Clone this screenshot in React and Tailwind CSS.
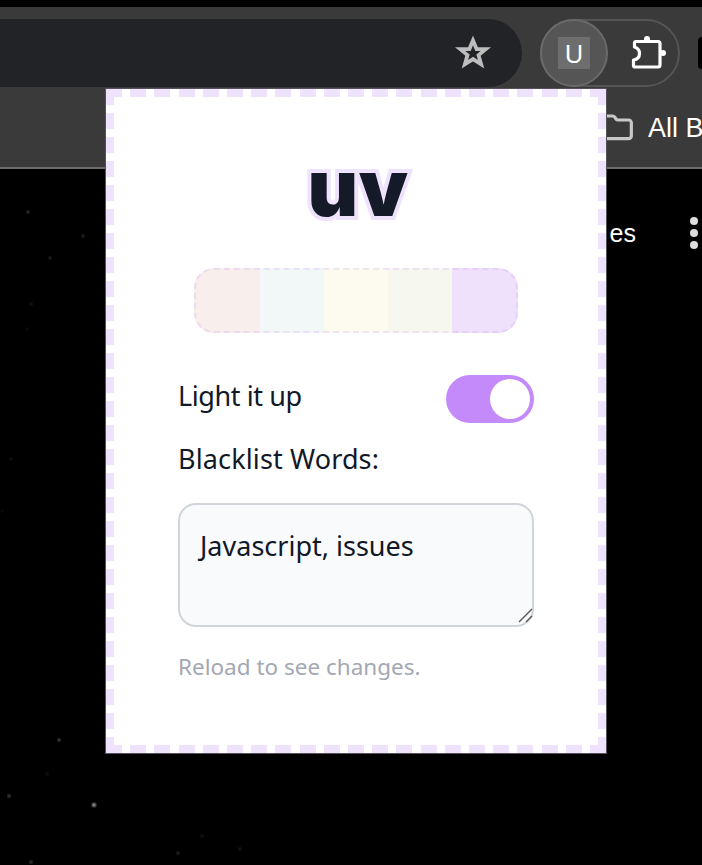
import React from "react";
import { Folder } from "lucide-react";

const swatches = ["flex-1 bg-[#f8eeec]", "w-16 bg-[#f2f7f7]", "w-16 bg-[#fdfbef]", "w-16 bg-[#f6f8f0]", "flex-1 bg-[#efe0fc]"];

const stars = [
  [28, 212, 1.6, 0.28],
  [83, 236, 1.5, 0.22],
  [50, 258, 1.5, 0.2],
  [31, 304, 1.6, 0.12],
  [27, 329, 1.4, 0.07],
  [11, 459, 1.6, 0.1],
  [2, 511, 1.4, 0.08],
  [59, 740, 1.5, 0.4],
  [47, 774, 1.6, 0.1],
  [9, 796, 1.5, 0.4],
  [94, 805, 1.8, 0.85],
  [31, 862, 1.5, 0.35],
  [178, 853, 1.6, 0.22],
  [202, 836, 1.5, 0.12],
  [240, 849, 1.6, 0.14],
];

const StarIcon = () => (
  <svg width="36" height="36" viewBox="0 0 36 36" fill="none" stroke="#bdbdbd" strokeWidth="3.8" strokeLinejoin="miter">
    <path d="M18 5.5l3.6 8.6h9.2l-7.3 6 2.6 9.2-8.1-5.2-8.1 5.2 2.6-9.2-7.3-6h9.2z" />
  </svg>
);

const PuzzleIcon = () => (
  <svg width="36" height="36" viewBox="0 0 36 36" fill="none" stroke="white" strokeWidth="3.2" strokeLinejoin="round">
    <circle cx="17" cy="4" r="3" fill="white" stroke="none" />
    <circle cx="33" cy="18" r="3" fill="white" stroke="none" />
    <path d="M6 6.5h22a2 2 0 0 1 2 2v21.5a2 2 0 0 1-2 2H5a1.5 1.5 0 0 1-1.5-1.5V25c3.5-.5 6-2.4 6-6.5S7 12.8 4.5 12V8A1.5 1.5 0 0 1 6 6.5z" />
  </svg>
);

const App = () => {
  return (
    <div className="relative h-[865px] w-[702px] overflow-hidden bg-black font-['Noto_Sans',sans-serif]">
      {/* Browser chrome */}
      <div className="mt-[7px] flex h-[162px] flex-col border-b-2 border-[#6b6b6b] bg-[#3a3a3a]">
        <div className="mt-3 flex h-[68px] items-center">
          <div className="flex h-full w-[522px] shrink-0 items-center justify-end rounded-r-[34px] bg-[#212326] pr-[31px]">
            <StarIcon />
          </div>
          <div className="ml-[18px] flex h-full w-[140px] shrink-0 items-center rounded-full border-2 border-[#555555]">
            <div className="-ml-[2px] flex h-[68px] w-[68px] items-center justify-center rounded-full border-2 border-[#6a6a6a] bg-[#555555]">
              <div className="flex h-8 w-8 items-center justify-center bg-[#6e6e6e] text-[26px] leading-none text-white">U</div>
            </div>
            <div className="ml-[22px]">
              <PuzzleIcon />
            </div>
          </div>
          <div className="ml-[18px] h-[32px] w-[10px] shrink-0 rounded-sm bg-black" />
        </div>
        <div className="mt-[25px] flex items-center justify-end gap-[14px]">
          <Folder size={32} strokeWidth={2.4} className="text-[#c7c7c7]" />
          <span className="w-[54px] overflow-hidden whitespace-nowrap font-['Liberation_Sans',sans-serif] text-[27px] leading-none text-white">All B</span>
        </div>
      </div>

      {/* Page behind the popup */}
      <div className="flex items-start justify-end pt-[48px]">
        <span className="mr-[54px] mt-1 font-['Liberation_Sans',sans-serif] text-[25px] leading-none text-white">es</span>
        <div className="mr-[4px] flex flex-col gap-1">
          <span className="h-2 w-2 rounded-full bg-[#dddddd]" />
          <span className="h-2 w-2 rounded-full bg-[#dddddd]" />
          <span className="h-2 w-2 rounded-full bg-[#dddddd]" />
        </div>
      </div>

      {/* Starfield */}
      <svg className="absolute inset-0" width="702" height="865">
        <filter id="glow">
          <feGaussianBlur stdDeviation="0.8" />
        </filter>
        {stars.map(([x, y, r, o], i) => (
          <circle key={i} cx={x} cy={y} r={r} fill="white" opacity={o} filter="url(#glow)" />
        ))}
      </svg>

      {/* Popup */}
      <div className="absolute left-[106px] top-[89px] flex h-[664px] w-[500px] flex-col px-[72px] shadow-[0_0_0_1px_#55525c] [background:repeating-linear-gradient(90deg,#efe2fc_0_16px,transparent_16px_24.2px)_top/100%_8px_no-repeat,repeating-linear-gradient(90deg,#efe2fc_0_16px,transparent_16px_24.2px)_bottom/100%_8px_no-repeat,repeating-linear-gradient(180deg,#efe2fc_0_16px,transparent_16px_24px)_left/8px_100%_no-repeat,repeating-linear-gradient(180deg,#efe2fc_0_16px,transparent_16px_24px)_right/8px_100%_no-repeat,white]">
        <h1 className="mt-[64px] pl-1 text-center font-['Inter',sans-serif] text-[78px] font-black leading-[70px] tracking-[0.5px] text-[#151a28] [-webkit-text-stroke:8px_#efe2fc] [paint-order:stroke_fill]">
          uv
        </h1>
        <div className="mx-auto mt-[45px] flex h-[65px] w-[324px] overflow-hidden rounded-[20px] outline-2 -outline-offset-2 outline-dashed outline-[#c58af9]/20">
          {swatches.map((c) => (
            <div key={c} className={c} />
          ))}
        </div>
        <div className="mt-[42px] flex items-start justify-between">
          <span className="text-[27px] leading-[42px] tracking-[-0.4px] text-[#111827]">Light it up</span>
          <div className="flex h-12 w-[88px] items-center justify-end rounded-full bg-[#c58af9] pr-1">
            <div className="h-10 w-10 rounded-full bg-white" />
          </div>
        </div>
        <p className="mt-[15px] text-[27px] leading-[42px] tracking-[0.13px] text-[#111827]">Blacklist Words:</p>
        <div className="relative mt-[23px]">
          <textarea
            readOnly
            defaultValue="Javascript, issues"
            className="block h-[124px] w-full resize-none rounded-[18px] border-2 border-[#d1d5db] bg-[#f9fafb] px-5 pb-4 pt-5 text-[27px] leading-[42px] text-[#111827] outline-none"
          />
          <svg className="absolute bottom-[3px] right-[1px]" width="16" height="16" viewBox="0 0 16 16" stroke="#555555" strokeWidth="1.4">
            <path d="M15 1L2 14M15 8l-6 6" />
          </svg>
        </div>
        <p className="mt-[19px] text-[22.5px] leading-[42px] text-[#a3a8b3]">Reload to see changes.</p>
      </div>
    </div>
  );
};

export default App;
